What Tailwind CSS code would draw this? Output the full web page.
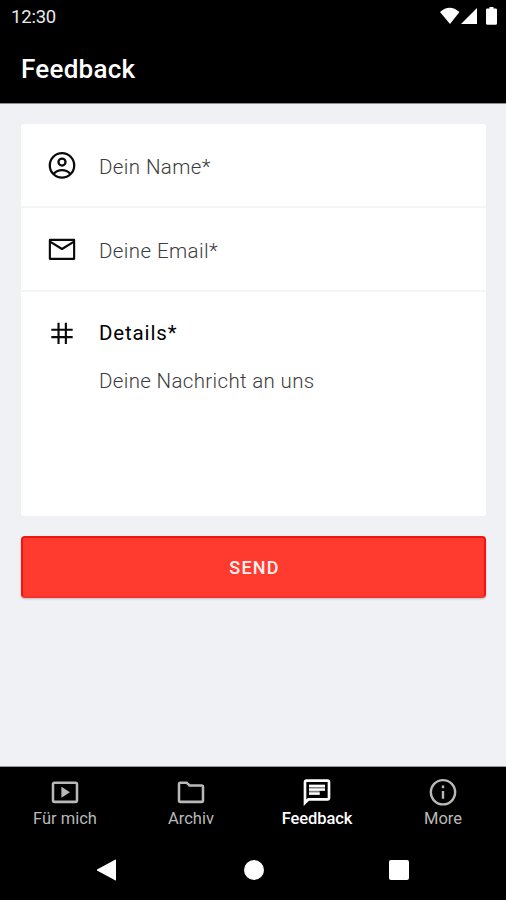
<!DOCTYPE html>
<html lang="de">
<head>
<meta charset="utf-8">
<title>Feedback</title>
<script src="https://cdn.jsdelivr.net/npm/@tailwindcss/browser@4"></script>
</head>
<body class="w-[506px] h-[900px] flex flex-col overflow-hidden bg-[#eff1f5] font-[Roboto,sans-serif]">
<header class="h-[103px] shrink-0 bg-black text-white shadow-[0_1px_0_#8f9094]">
  <div class="h-[34px] flex justify-between pl-[11px] pr-[9px]">
    <span class="text-[18.5px] leading-[34px] tracking-[-0.2px] text-[#e8e8e8]">12:30</span>
    <svg class="mt-[6px]" width="58" height="20" viewBox="439 6 58 20" fill="#fff">
      <path d="M440 12Q449.500 3.500 459.500 12L450 24Z"/>
      <path d="M477 8V24H461Z"/>
      <path d="M489.500 7h4v1.500h2.200a1.300 1.300 0 0 1 1.300 1.300v13.400a1.500 1.500 0 0 1-1.500 1.500h-8a1.500 1.500 0 0 1-1.500-1.500v-13.400a1.300 1.300 0 0 1 1.300-1.300h2.200z"/>
    </svg>
  </div>
  <h1 class="pl-[21px] text-[26px] leading-[70px] font-medium tracking-[0.25px]">Feedback</h1>
</header>
<main class="flex-1 px-5 pt-[21px] pl-[21px]">
  <section class="h-[392px] bg-white rounded-[3px]">
    <div class="h-[84px] flex items-center border-b-2 border-[#f3f4f6] pl-[25px]">
      <svg width="32" height="32" viewBox="0 0 24 24" fill="none" stroke="#0a0a0a" stroke-width="1.700">
        <circle cx="12" cy="12.300" r="9.150"/><circle cx="12" cy="9.800" r="2.650"/><path d="M5.800 18.500C7.600 16.600 9.700 15.800 12 15.800s4.400.8 6.200 2.700"/>
      </svg>
      <span class="ml-[21px] mt-[4px] text-[20.500px] font-light tracking-[0.4px] text-[#3c3c3c]">Dein Name*</span>
    </div>
    <div class="h-[84px] flex items-center border-b-2 border-[#f3f4f6] pl-[25px]">
      <svg width="32" height="32" viewBox="0 0 24 24" fill="none" stroke="#0a0a0a" stroke-width="1.600" stroke-linejoin="round">
        <path d="M2.900 5.200h18.200v14.200H2.900z"/><path d="M3 6.400 12 12l9-5.600"/>
      </svg>
      <span class="ml-[21px] mt-[4px] text-[20.500px] font-light tracking-[0.4px] text-[#3c3c3c]">Deine Email*</span>
    </div>
    <div class="flex pl-[25px] pt-[25px]">
      <svg width="32" height="32" viewBox="0 0 24 24" fill="none" stroke="#0a0a0a" stroke-width="1.600">
        <path d="M9.400 4.300v16M14.900 4.300v16M4 9.600h16M4 15.100h16"/>
      </svg>
      <div class="ml-[21px] mt-[1px] text-[20.500px]">
        <div class="leading-[30px] tracking-[0.85px] text-black">Details*</div>
        <div class="mt-[18px] leading-[30px] font-light tracking-[0.34px] text-[#3c3c3c]">Deine Nachricht an uns</div>
      </div>
    </div>
  </section>
  <button class="block mt-5 w-full h-[62px] pt-px pl-[2px] rounded-[4px] border-2 border-[#f0150f] border-b-[#f9332a] bg-[#ff3b30] text-[#fff1ef] text-[18px] font-medium tracking-[1.2px] shadow-[0_1px_2px_rgba(0,0,0,0.22)]">SEND</button>
</main>
<footer class="h-[133px] shrink-0 bg-black shadow-[0_-1px_0_#9b9ca0]">
  <nav class="h-[73px] grid grid-cols-4 pt-[9px] pl-[2px] text-[16.500px] leading-[20px] text-[#b9b9b9]">
    <div class="flex flex-col items-center">
      <svg width="32" height="32" viewBox="0 0 24 24" fill="none" stroke="currentColor" stroke-width="1.900"><rect x="3" y="5" width="18" height="14.400" rx="1.200"/><path d="M9.300 8v8.400l6.400-4.200z" fill="currentColor" stroke="none"/></svg>
      <span class="mt-px">Für mich</span>
    </div>
    <div class="flex flex-col items-center">
      <svg width="32" height="32" viewBox="0 0 24 24" fill="none" stroke="currentColor" stroke-width="1.900"><path d="M3 6q0-1 1-1h4.700l2.200 2.100H20q1 0 1 1v10.300q0 1-1 1H4q-1 0-1-1z"/></svg>
      <span class="mt-px">Archiv</span>
    </div>
    <div class="flex flex-col items-center text-white">
      <svg width="32" height="32" viewBox="0 0 24 24" fill="currentColor"><path d="M4 2.500h16c1.100 0 2 .9 2 2v12c0 1.100-.9 2-2 2H6l-4 4v-18c0-1.100.9-2 2-2zm0 2v13.200l1.200-1.200H20v-12z"/><path d="M6 6.500h12v1.700H6zM6 9.400h12v1.700H6zM6 12.300h8V14H6z"/><path d="M6 6.500h12v4.600H14V14H6z" opacity=".5"/></svg>
      <span class="mt-px font-medium tracking-[-0.1px]">Feedback</span>
    </div>
    <div class="flex flex-col items-center">
      <svg width="32" height="32" viewBox="0 0 24 24" fill="none" stroke="currentColor" stroke-width="1.800"><circle cx="12" cy="12.200" r="9.100"/><path d="M12 11.200v5.800M12 7.200v2"/></svg>
      <span class="mt-px">More</span>
    </div>
  </nav>
  <div class="h-[60px] flex justify-between pl-[96px] pr-[97px] pt-[19px]">
    <svg width="22" height="22" viewBox="0 0 22 22" fill="#fff"><path d="M19.500.5q.5 0 .5.500v20q0 .5-.5.500L1 11.500v-1z"/></svg>
    <div class="mt-[1px] size-5 rounded-full bg-white"></div>
    <div class="mt-[1px] size-5 rounded-[2px] bg-white"></div>
  </div>
</footer>
</body>
</html>
